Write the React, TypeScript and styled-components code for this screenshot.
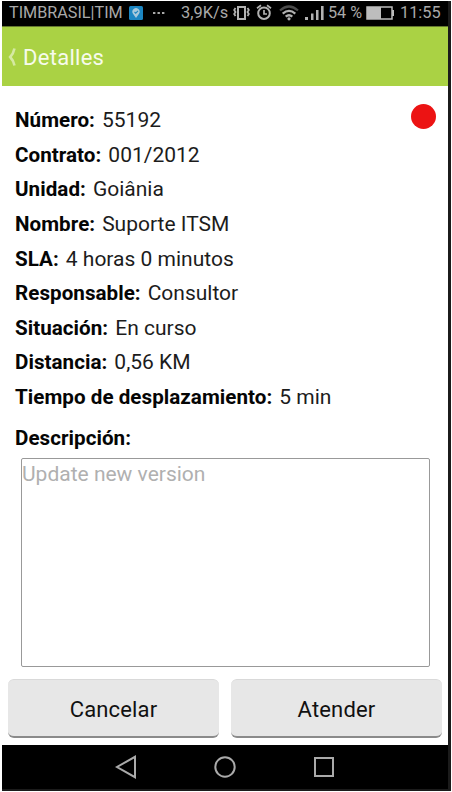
import React from "react";
import styled, { createGlobalStyle } from "styled-components";

const GlobalStyle = createGlobalStyle`
  * { box-sizing: border-box; }
  body { margin: 0; background: #fff; font-family: Roboto, "Liberation Sans", sans-serif; }
`;

const Frame = styled.div`
  width: 452px;
  height: 792px;
  padding: 1px 1px 1px 2px;
  background: #fff;
`;

const Bezel = styled.div`
  height: 790px;
  padding: 0 3px 2px 0;
  background: #1b1b1b;
`;

const Screen = styled.div`
  height: 788px;
  display: flex;
  flex-direction: column;
  background: #fff;
`;

const StatusBar = styled.div`
  height: 25px;
  flex: none;
  display: flex;
  align-items: center;
  background: #000;
  color: #a9a9a9;
  padding-bottom: 2px;
`;

const StatusText = styled.span<{ $left: number; $width: number; $size: number }>`
  margin-left: ${(p) => p.$left}px;
  width: ${(p) => p.$width}px;
  font-size: ${(p) => p.$size}px;
  line-height: 23px;
  white-space: nowrap;
  flex: none;
`;

const StatusIcon = styled.svg<{ $left: number }>`
  margin-left: ${(p) => p.$left}px;
  display: block;
  flex: none;
`;

const Header = styled.header`
  height: 60px;
  flex: none;
  display: flex;
  align-items: center;
  background: #aad244;
  color: #f7fbec;
  padding-left: 5px;
  border-top: 1px solid #65782f;
`;

const Title = styled.h1`
  margin: 2px 0 0 7px;
  font-size: 22px;
  font-weight: 400;
  line-height: 28px;
  letter-spacing: 0.28px;
`;

const Content = styled.main`
  height: 592px;
  flex: none;
  padding: 17px 13px 0;
`;

const Summary = styled.div`
  display: flex;
  justify-content: space-between;
`;

const Details = styled.dl`
  margin: 0;
`;

const DetailRow = styled.div`
  height: 34.65px;
  display: flex;
  gap: 7px;
  font-size: 21px;
  line-height: 34.65px;
  color: #1c1c1c;
  white-space: nowrap;
`;

const Label = styled.dt`
  font-size: 20.6px;
  font-weight: 700;
  letter-spacing: 0.04px;
  color: #050505;
`;

const Value = styled.dd`
  margin: 0;
`;

const StatusDot = styled.div`
  width: 25px;
  height: 25px;
  margin: 1px -1px 0 0;
  border-radius: 50%;
  background: #ec1313;
`;

const DescriptionLabel = styled.label`
  display: block;
  margin-top: 6.4px;
  height: 35px;
  font-size: 20.6px;
  font-weight: 700;
  letter-spacing: 0.04px;
  line-height: 35px;
  color: #050505;
`;

const Description = styled.textarea`
  display: block;
  width: 409px;
  height: 209px;
  margin: 1.6px 0 0 6px;
  padding: 2px 0 0 0;
  border: 1px solid #999;
  border-radius: 2px;
  background: #fff;
  resize: none;
  outline: none;
  font-family: inherit;
  font-size: 21px;
  line-height: 26px;
  &::placeholder { color: #b0b0b0; opacity: 1; }
`;

const Actions = styled.div`
  height: 67px;
  flex: none;
  display: flex;
  gap: 12px;
  padding: 1px 6px 7px;
`;

const ActionButton = styled.button`
  flex: 1;
  padding: 3px 0 0 0;
  border: 0;
  border-top: 1px solid #d9d9d9;
  border-bottom: 2px solid #8b8b8b;
  border-radius: 6px;
  background: #e7e7e7;
  color: #111;
  font-family: inherit;
  font-size: 22px;
  letter-spacing: 0.15px;
`;

const NavBar = styled.nav`
  height: 44px;
  flex: none;
  background: #000;
  display: flex;
  justify-content: center;
  align-items: center;
  gap: 76px;
`;

const rows = [
  { label: "Número:", value: "55192" },
  { label: "Contrato:", value: "001/2012" },
  { label: "Unidad:", value: "Goiânia" },
  { label: "Nombre:", value: "Suporte ITSM" },
  { label: "SLA:", value: "4 horas 0 minutos" },
  { label: "Responsable:", value: "Consultor" },
  { label: "Situación:", value: "En curso" },
  { label: "Distancia:", value: "0,56 KM" },
  { label: "Tiempo de desplazamiento:", value: "5 min" },
];

export default function App() {
  return (
    <Frame>
      <GlobalStyle />
      <Bezel>
        <Screen>
          <StatusBar>
            <StatusText $left={7} $width={114} $size={16.2}>TIMBRASIL|TIM</StatusText>
            <StatusIcon $left={6} width="14" height="14" viewBox="0 0 14 14">
              <rect width="14" height="14" rx="1.5" fill="#1c86c2" />
              <path d="M7 12L4 7.8A3.6 3.6 0 1 1 10 7.8Z" fill="#a9cadc" />
              <path d="M5.5 6L6.7 7.2L9 4.8" fill="none" stroke="#1c86c2" strokeWidth="1.1" />
            </StatusIcon>
            <StatusIcon $left={9} width="14" height="4" viewBox="0 0 14 4" fill="#a9a9a9">
              <rect x="1" y="1" width="2.4" height="2" /><rect x="5.5" y="1" width="2.4" height="2" /><rect x="10" y="1" width="2.4" height="2" />
            </StatusIcon>
            <StatusText $left={15} $width={48} $size={16.4}>3,9K/s</StatusText>
            <StatusIcon $left={4} width="17" height="16" viewBox="0 0 17 16" fill="none" stroke="#b2b2b2" strokeWidth="2">
              <rect x="5" y="2" width="7" height="12" />
              <path d="M2.5 3L1.2 5L2.5 7L1.2 9L2.5 11M14.5 3L15.8 5L14.5 7L15.8 9L14.5 11" strokeWidth="1.8" />
            </StatusIcon>
            <StatusIcon $left={6} width="16" height="17" viewBox="0 0 16 17" fill="none" stroke="#b2b2b2" strokeWidth="2">
              <circle cx="8" cy="9.2" r="5.8" /><path d="M1 4.2L5 1.2M15 4.2L11 1.2M8 6v4h3" strokeWidth="1.7" />
            </StatusIcon>
            <StatusIcon $left={7} width="20" height="16" viewBox="0 0 20 16" fill="none">
              <path d="M1 5.5Q10-2.5 19 5.5" stroke="#4c4c4c" strokeWidth="2.2" />
              <path d="M3.7 8.6Q10 3 16.3 8.6M6.7 11.7Q10 8.8 13.3 11.7" stroke="#b2b2b2" strokeWidth="2.2" /><circle cx="10" cy="13.8" r="1.6" fill="#b2b2b2" />
            </StatusIcon>
            <StatusIcon $left={6} width="20" height="16" viewBox="0 0 20 16" fill="#b2b2b2">
              <path d="M0 12h3v3H0zM6 8.5h2.5V15H6zM11 5h2.5v10H11zM16 1h2.6v14H16z" />
            </StatusIcon>
            <StatusText $left={3} $width={35} $size={16.2}>54 %</StatusText>
            <StatusIcon $left={3} width="29" height="14" viewBox="0 0 29 14">
              <rect x="1" y="1" width="25" height="12" fill="none" stroke="#bdbdbd" strokeWidth="1.5" />
              <path d="M1 1h14v12H1zM26 4h2v6h-2z" fill="#bdbdbd" />
            </StatusIcon>
            <StatusText $left={5} $width={42} $size={16.3}>11:55</StatusText>
          </StatusBar>
          <Header>
            <svg width="9" height="20" viewBox="0 0 9 20" fill="none" stroke="#d5e9a2" strokeWidth="2.6"><path d="M7.5 1.5Q6.5 6.5 3.2 10Q6.5 13.5 7.5 18.5" /></svg>
            <Title>Detalles</Title>
          </Header>
          <Content>
            <Summary>
              <Details>
                {rows.map((r) => (
                  <DetailRow key={r.label}>
                    <Label>{r.label}</Label>
                    <Value>{r.value}</Value>
                  </DetailRow>
                ))}
              </Details>
              <StatusDot />
            </Summary>
            <DescriptionLabel htmlFor="description">Descripción:</DescriptionLabel>
            <Description id="description" placeholder="Update new version" />
          </Content>
          <Actions>
            <ActionButton>Cancelar</ActionButton>
            <ActionButton>Atender</ActionButton>
          </Actions>
          <NavBar>
            <svg width="22" height="24" viewBox="0 0 22 24" fill="none" stroke="#aaa" strokeWidth="2"><path d="M20 1.8v20.4L2 12Z" /></svg>
            <svg width="24" height="24" viewBox="0 0 24 24" fill="none" stroke="#aaa" strokeWidth="2"><circle cx="12" cy="12" r="9.7" /></svg>
            <svg width="22" height="22" viewBox="0 0 22 22" fill="none" stroke="#aaa" strokeWidth="2"><rect x="2" y="2" width="18" height="18" /></svg>
          </NavBar>
        </Screen>
      </Bezel>
    </Frame>
  );
}
